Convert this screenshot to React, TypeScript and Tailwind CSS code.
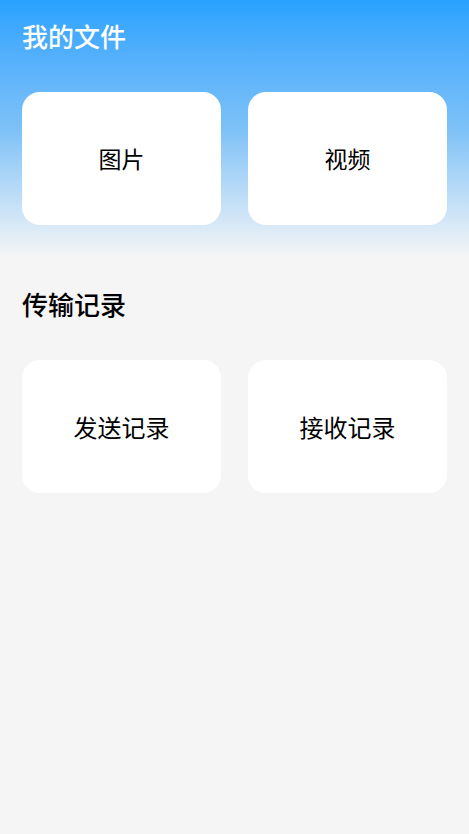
import React from 'react';

const font = { fontFamily: '"Noto Sans CJK SC", "Noto Sans", sans-serif' };

const Card: React.FC<{ label: string; size?: string }> = ({ label, size = 'text-[23px]' }) => (
  <div className={`h-[133px] rounded-[18px] bg-white flex items-center justify-center text-black ${size}`}>
    {label}
  </div>
);

const App: React.FC = () => {
  return (
    <div className="min-h-[834px] w-full bg-[#f5f5f5]" style={font}>
      {/* Header gradient */}
      <div className="bg-gradient-to-b from-[#27a2ff] via-[#7cc1f7] to-[#f5f5f5] px-[22px] pt-[17px] pb-[32px]">
        <h1 className="text-[26px] leading-[38px] font-medium text-white">我的文件</h1>
        <div className="mt-[37px] grid grid-cols-2 gap-[27px]">
          <Card label="图片" />
          <Card label="视频" />
        </div>
      </div>

      {/* Transfer records */}
      <div className="px-[22px] pt-[28px]">
        <h2 className="text-[26px] leading-[38px] font-medium text-black">传输记录</h2>
        <div className="mt-[37px] grid grid-cols-2 gap-[27px]">
          <Card label="发送记录" size="text-[24px]" />
          <Card label="接收记录" size="text-[24px]" />
        </div>
      </div>
    </div>
  );
};

export default App;
